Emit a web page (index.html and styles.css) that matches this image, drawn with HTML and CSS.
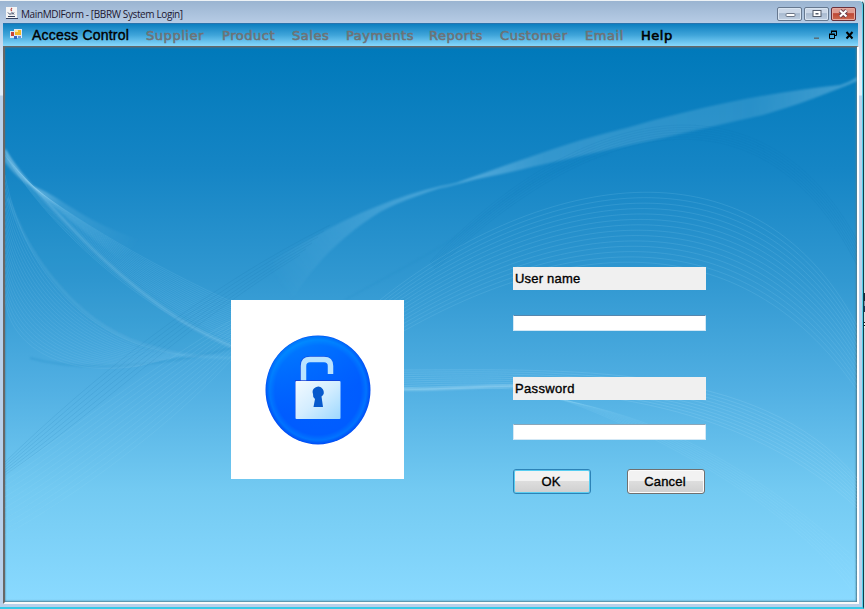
FILE: index.html
```html
<!DOCTYPE html>
<html lang="en">
<head>
<meta charset="utf-8">
<title>MainMDIForm</title>
<link rel="stylesheet" href="styles.css">
</head>
<body>
<div class="window">
  <header class="titlebar">
    <svg class="app-icon" width="12" height="12" viewBox="0 0 12 12"><path fill="#f5f5f5" d="M0 0h11v11H0z"/><path fill="none" stroke="#ba4b4b" stroke-width="1.2" d="M6 1q-2 2 0 3"/><path fill="none" stroke="#38435f" d="M2 5.500l2 2 2-2 2 2M8 5.500l-2 2M2 9.500h7M0 11.500h12"/></svg>
    <span class="title">MainMDIForm - [BBRW System Login]</span>
    <div class="controls">
      <button class="ctl" aria-label="Minimize"><svg width="24" height="13" viewBox="0 0 24 13"><rect x="8" y="6.500" width="9" height="3" rx="1" fill="#fff" stroke="#6c7687"/></svg></button>
      <button class="ctl" aria-label="Maximize"><svg width="24" height="13" viewBox="0 0 24 13"><rect x="8" y="3.500" width="8" height="6" fill="#fff" stroke="#535c6c"/><path d="M10.500 6h3v1.500h-3z" fill="#535c6c"/></svg></button>
      <button class="ctl close" aria-label="Close"><svg width="25" height="13" viewBox="0 0 25 13"><path d="M9 3.500l6.500 6M15.500 3.500l-6.500 6" stroke="#643c49" stroke-width="4"/><path d="M9 3.500l6.500 6M15.500 3.500l-6.500 6" stroke="#fff" stroke-width="2.200"/></svg></button>
    </div>
  </header>
  <nav class="menubar">
    <svg class="form-icon" width="12" height="12" viewBox="0 0 12 12"><path fill="#dfe8f2" d="M4 0h8v9H4zM0 2h5v7H0z"/><path fill="#f0b827" d="M5 1h6v5H5z"/><path fill="#fbe69a" d="M5 1h3v2H5z"/><path fill="#c94334" d="M1 3h3v4H1z"/><path fill="#3566c2" d="M4 7h3v3H4z"/><path fill="#6b93d8" d="M8 7h3v2H8z"/></svg>
    <span class="item access">Access Control</span>
    <span class="item w-supplier off">Supplier</span>
    <span class="item w-product off">Product</span>
    <span class="item w-sales off">Sales</span>
    <span class="item w-payments off">Payments</span>
    <span class="item w-reports off">Reports</span>
    <span class="item w-customer off">Customer</span>
    <span class="item w-email off">Email</span>
    <span class="item help">Help</span>
    <svg class="child-controls" width="42" height="12" viewBox="0 0 42 12"><path stroke="#596c76" stroke-width="1.500" d="M2 9.200h5"/><path fill="none" stroke="#000" d="M19.500 4.500V2.500h5v4H23M17.500 5.500h5v4h-5z"/><path stroke="#000" stroke-width="1.500" d="M19 2.300h6M17 5.200h6"/><path stroke="#000" stroke-width="2" d="M34.500 3l6 6.500M40.500 3l-6 6.500"/></svg>
  </nav>
  <main class="client">
    <svg class="waves" viewBox="5 47 852 554" width="852" height="554" preserveAspectRatio="none">
      <defs>
        <linearGradient id="fade" gradientUnits="userSpaceOnUse" x1="290" y1="300" x2="450" y2="185"><stop offset="0" stop-color="#9bd6f5" stop-opacity="0"/><stop offset="1" stop-color="#9bd6f5" stop-opacity=".4"/></linearGradient>
        <linearGradient id="ribbon" gradientUnits="userSpaceOnUse" x1="440" y1="0" x2="857" y2="0"><stop offset="0" stop-color="#8acdf0" stop-opacity=".6"/><stop offset=".25" stop-color="#7cc0e4" stop-opacity=".32"/><stop offset=".75" stop-color="#7cc0e4" stop-opacity=".27"/><stop offset="1" stop-color="#7cc0e4" stop-opacity=".5"/></linearGradient>
        <linearGradient id="tail" gradientUnits="userSpaceOnUse" x1="30" y1="185" x2="130" y2="255"><stop offset="0" stop-color="#b5e2f8" stop-opacity=".5"/><stop offset=".3" stop-color="#b5e2f8" stop-opacity=".16"/><stop offset="1" stop-color="#b5e2f8" stop-opacity="0"/></linearGradient>
        <filter id="soft"><feGaussianBlur stdDeviation=".8"/></filter>
      </defs>
      <g filter="url(#soft)">
        <path fill="url(#fade)" d="M290 305C305 275 335 240 380 212C405 199 430 191 457 183C415 190 370 207 330 228C295 247 260 265 231 285V310Z"/>
        <path fill="url(#ribbon)" d="M440 189C465 180 497 168 530 157C563 145 596 135 630 127C664 117 696 109 730 102C768 94 804 89 840 85C847 83 852 80 857 77V81C849 85 840 88 830 92C810 100 787 108 763 115C730 122 697 130 663 138C630 145 597 152 563 160C540 165 520 170 497 175C476 179 460 183 440 189Z"/>
        <path fill="url(#tail)" d="M30 185C60 195 80 220 135 238C180 255 215 270 250 285V335C180 310 90 240 30 185Z"/>
        <path fill="#b5e2f8" fill-opacity=".4" d="M5 148C12 162 21 174 33 187C24 183 13 173 5 162Z"/>
        <path fill="none" stroke="#b5e2f8" stroke-opacity=".4" stroke-width="1.500" d="M5 150C15 166 26 180 38 192C75 233 120 280 180 320C200 332 220 342 240 350"/>
        <path fill="#0875b2" fill-opacity=".06" d="M5 180C30 270 85 350 185 355C215 354 225 349 240 346C160 310 80 240 30 187L5 155Z"/>
        <path fill="none" stroke="#8bd0f2" stroke-opacity=".28" stroke-width="1.500" d="M8 198C30 260 80 330 155 348C190 359 215 357 240 358"/>
        <path fill="none" stroke="#1279b3" stroke-opacity=".25" stroke-width="1.500" d="M30 358C90 375 180 363 240 346"/>
        <path fill="none" stroke="#1279b3" stroke-opacity=".2" d="M345 300C380 280 430 255 465 231C500 205 530 172 610 154"/>
        <path fill="none" stroke="#d2f0fc" stroke-opacity=".5" stroke-width="2" d="M400 389C430 391 470 386 516 386"/>
      </g>
      <g id="lines" fill="none"></g>
    </svg>
    <div class="login">
      <div class="picture">
        <svg width="108" height="112" viewBox="0 0 108 112">
          <defs>
            <radialGradient id="disc" cx=".5" cy=".5" r=".5"><stop offset="0" stop-color="#006cff"/><stop offset=".82" stop-color="#0065ff"/><stop offset=".92" stop-color="#0086ff"/><stop offset="1" stop-color="#004bf2"/></radialGradient>
            <linearGradient id="shade" x1="0" y1="0" x2=".4" y2="1"><stop offset="0" stop-color="#00a2ff" stop-opacity=".6"/><stop offset=".7" stop-color="#0047ff" stop-opacity=".3"/></linearGradient>
            <linearGradient id="body" x1="0" y1="0" x2="1" y2="1"><stop offset="0" stop-color="#f3faff"/><stop offset=".5" stop-color="#d3edff"/><stop offset="1" stop-color="#9cd8ff"/></linearGradient>
          </defs>
          <ellipse cx="54" cy="56" rx="52.500" ry="54.500" fill="url(#disc)"/>
          <ellipse cx="54" cy="56" rx="52" ry="54" fill="url(#shade)"/>
          <path fill="none" stroke="#1737cf" stroke-opacity=".6" stroke-width="5" d="M38.500 47V32Q38.500 24.500 46 24.500H60Q66.500 24.500 66.500 32V39"/>
          <path fill="none" stroke="#b9e3ff" stroke-width="5.500" d="M39.500 48V32Q39.500 25.500 46 25.500H60Q66.500 25.500 66.500 32V40"/>
          <rect x="31" y="46" width="45" height="38" fill="#1739cf" fill-opacity=".7"/>
          <rect x="31.500" y="47" width="45" height="38" rx="1" fill="url(#body)"/>
          <path fill="#0759cc" d="M49 60a5.500 5.500 0 1 1 8.500 2.500L59 73H49.500L51 65Q48.500 63 49 60Z"/>
        </svg>
      </div>
      <form class="fields">
        <label class="label" for="user">User name</label>
        <input class="input" id="user" type="text">
        <label class="label second" for="pass">Password</label>
        <input class="input" id="pass" type="password">
        <div class="buttons">
          <button class="btn primary" type="button">OK</button>
          <button class="btn" type="button">Cancel</button>
        </div>
      </form>
    </div>
  </main>
</div>
<aside class="edge"><i class="edge-dark"></i><i class="edge-mark"></i></aside>
<script src="script.js"></script>
</body>
</html>
```
FILE: styles.css
```css
* { box-sizing: border-box; }
body {
  margin: 0;
  width: 865px;
  height: 609px;
  display: flex;
  overflow: hidden;
  background: #e9eef3;
  font-family: "Liberation Sans", Arial, sans-serif;
  color: #000;
}
.window {
  width: 864px;
  height: 609px;
  padding: 0 5px 0 3px;
  border-top: 1px solid #edf2f6;
  border-right: 1px solid #123c4a;
  border-bottom: 2px solid #36c9e8;
  border-top-right-radius: 5px;
  box-shadow: inset -1px 0 #53cfe9;
  background: linear-gradient(#9ab4d1 0, #b8cde6 23px, #d9e6f5 60px, #e2ecf8 94px, #b9d0ea 95px);
}
.titlebar { height: 22px; display: flex; align-items: center; padding: 4px 2px 0 3px; }
.app-icon { margin: 0 3px 2px 0; }
.title { font: 10px/16px "Open Sans", sans-serif; width: 170px; white-space: nowrap; color: #1d1730; letter-spacing: -.38px; }
.controls { margin-left: auto; display: flex; gap: 2px; padding-bottom: 1px; }
.ctl { width: 25px; height: 14px; padding: 0; border: 1px solid #66788f; border-radius: 2px; background: linear-gradient(#cbd7e7 0 45%, #a7b9cf 46%, #c1d0e2); box-shadow: inset 0 0 0 1px #d8e4f1; display: flex; align-items: center; justify-content: center; overflow: hidden; }
.ctl svg { flex: none; }
.close { border-color: #6a303a; background: linear-gradient(#df9b91 0 45%, #bd4634 46%, #cd6950); box-shadow: inset 0 0 0 1px #e7aaa0; }
.menubar { height: 23px; display: flex; align-items: center; padding: 0 4px 0 7px; background: linear-gradient(#0c7fc0, #3fa4d9 50%, #86d8fc); border-top: 1px solid #2874ae; }
.form-icon { margin-right: 10px; }
.item { font: 13px/20px "DejaVu Sans", sans-serif; letter-spacing: .55px; -webkit-text-stroke: .6px currentColor; white-space: nowrap; padding-top: 1px; }
.off { color: #6d7377; }
.access { width: 114px; font: 14px/20px "Liberation Sans", sans-serif; letter-spacing: .2px; -webkit-text-stroke: .4px #000; padding: 0 0 1px; }
.w-supplier { width: 76px; }
.w-product { width: 70px; }
.w-sales { width: 54px; }
.w-payments { width: 83px; }
.w-reports { width: 71px; }
.w-customer { width: 85px; }
.w-email { width: 56px; }
.child-controls { margin-left: auto; }
.client { height: 558px; display: grid; margin-right: -1px; border: 1px solid #686766; border-left-width: 2px; border-right: 2px solid #fff; border-bottom: 2px solid #fafafa; background: linear-gradient(#0079ba 0, #1585c5 22%, #3198d1 42%, #52b0e3 62%, #73caf2 80%, #8adaff 100%); box-shadow: inset 0 1px 2px #456f86, inset -1px -1px 2px #50849a; }
.waves, .login { grid-area: 1 / 1; }
.login { display: flex; align-items: flex-start; z-index: 1; }
.picture { margin: 253px 109px 0 226px; width: 173px; height: 179px; background: #fff; display: flex; align-items: center; justify-content: center; }
.fields { width: 193px; margin-top: 220px; display: flex; flex-direction: column; }
.label, .btn { font: 13px/22px "Liberation Sans", sans-serif; letter-spacing: .2px; -webkit-text-stroke: .35px #000; }
.label { height: 23px; background: #f0f0f0; padding: 1px 0 0 2px; }
.second { margin-top: 46px; letter-spacing: .35px; }
.input { width: 193px; height: 16px; margin-top: 25px; padding: 0; border: 1px solid #d3e8f5; border-top-color: #5686ad; background: #fff; }
.second + .input { margin-top: 24px; border-top-color: #8ba6b8; }
.buttons { margin: 29px 1px 0 0; display: flex; justify-content: space-between; }
.btn { width: 78px; height: 25px; padding: 0 2px 0 0; color: #000; border: 1px solid #707070; border-radius: 3px; background: linear-gradient(#f2f2f2 0 48%, #dddddd 50%, #cfcfcf); box-shadow: inset 0 0 0 1px #fbfbfb; }
.primary { border-color: #2d83b7; box-shadow: inset 0 0 0 1px #58cdf1; }
.edge { width: 1px; height: 609px; padding-top: 293px; background: #d3d9de; }
.edge-dark { display: block; height: 19px; background: linear-gradient(#1c2638 0 40%, #8795ab 40% 70%, #1d3152 70%); }
.edge-mark { display: block; height: 6px; margin-top: 10px; background: repeating-linear-gradient(#111 0 1px, #eee 1px 3px); }
```
FILE: script.js
```js
// Each family is a fan of cubic curves blended from a first curve to a last one.
const families = [
  { n: 22, color: '#8dd0f0', opacity: 0.15, a: [5,155, 50,230, 150,320, 250,352], b: [30,185, 90,230, 170,275, 250,310] },
  { n: 20, color: '#8bd0f2', opacity: 0.14, a: [5,175, 25,280, 95,345, 185,355], b: [5,300, 10,345, 60,378, 140,366] },
  { n: 6, color: '#126fa8', opacity: 0.14, a: [5,462, 90,380, 200,290, 330,225], b: [5,475, 100,410, 185,325, 300,255] },
  { n: 12, color: '#a0dcf7', opacity: 0.12, a: [5,475, 60,440, 130,380, 240,315], b: [5,535, 70,500, 180,420, 240,350] },
  { n: 14, color: '#8dd2f3', opacity: 0.16, a: [380,300, 530,180, 750,125, 857,325], b: [380,345, 560,235, 740,220, 857,390] },
  { n: 7, color: '#0b6cab', opacity: 0.11, a: [430,262, 570,110, 760,60, 857,240], b: [435,270, 590,120, 760,75, 857,265] },
  { n: 10, color: '#a7dff8', opacity: 0.18, a: [404,370, 560,370, 760,360, 857,478], b: [404,390, 600,380, 750,410, 857,508] },
  { n: 8, color: '#b5e8ff', opacity: 0.09, a: [560,400, 680,420, 780,490, 857,560], b: [530,390, 640,420, 800,510, 857,598] }
];
const group = document.getElementById('lines');
for (const f of families) {
  for (let i = 0; i < f.n; i++) {
    const t = i / (f.n - 1);
    const p = f.a.map((v, k) => (v + (f.b[k] - v) * t).toFixed(1));
    const path = document.createElementNS('http://www.w3.org/2000/svg', 'path');
    path.setAttribute('d', `M${p[0]} ${p[1]}C${p.slice(2).join(' ')}`);
    path.setAttribute('stroke', f.color);
    path.setAttribute('stroke-opacity', f.opacity);
    group.appendChild(path);
  }
}
```
